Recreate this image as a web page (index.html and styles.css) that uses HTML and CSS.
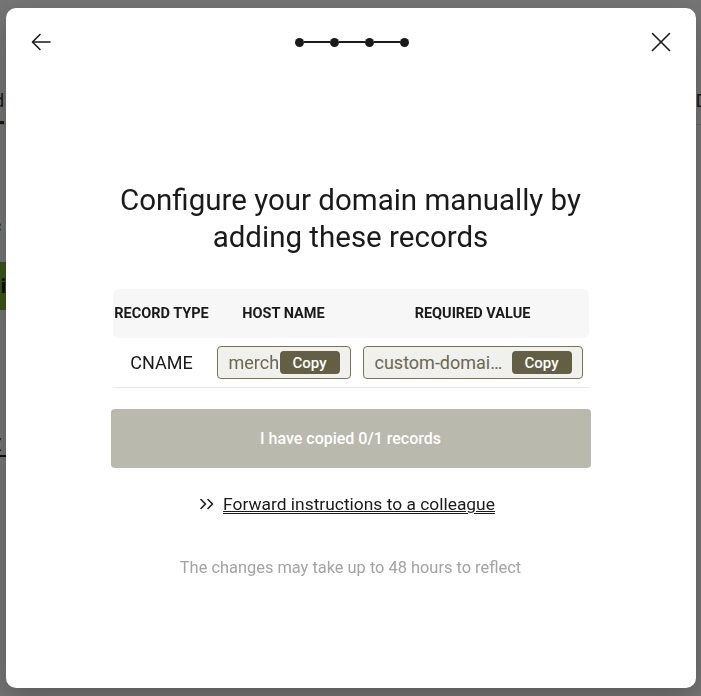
FILE: index.html
```html
<!DOCTYPE html>
<html>
<head lang="en">
    <meta charset="UTF-8">
    <title>Configure domain</title>
    <link rel="stylesheet" href="styles.css">
</head>
<body>
<div class="page">
    <div class="tabs">
        <span class="tab tab-active">Build</span>
        <span class="tab tab-right">Domains</span>
    </div>
    <p class="page-note">Doc</p>
    <div class="page-banner">Publi</div>
    <div class="page-tool"><span>Z</span></div>
</div>

<div class="backdrop">
    <div class="modal">
        <div class="modal-head">
            <button class="icon-btn" type="button">
                <svg width="24" height="24" viewBox="0 0 24 24" fill="none" stroke="#1a1a1a" stroke-width="1.6" stroke-linecap="round" stroke-linejoin="round">
                    <path d="M21 12H4"/>
                    <path d="M11 4.5L3.5 12L11 19.5"/>
                </svg>
            </button>
            <div class="steps">
                <span class="dot"></span><span class="bar"></span>
                <span class="dot"></span><span class="bar"></span>
                <span class="dot"></span><span class="bar"></span>
                <span class="dot"></span>
            </div>
            <button class="icon-btn" type="button">
                <svg width="24" height="24" viewBox="0 0 24 24" fill="none" stroke="#1a1a1a" stroke-width="1.6" stroke-linecap="round">
                    <path d="M3.5 3.5L20.5 20.5"/>
                    <path d="M20.5 3.5L3.5 20.5"/>
                </svg>
            </button>
        </div>

        <div class="modal-body">
            <h1 class="title">Configure your domain manually by adding these records</h1>

            <div class="records">
                <div class="records-head">
                    <span>RECORD TYPE</span>
                    <span>HOST NAME</span>
                    <span>REQUIRED VALUE</span>
                </div>
                <div class="records-row">
                    <span class="rec-type">CNAME</span>
                    <div class="field field-host">
                        <span class="field-text">merch</span>
                        <button class="copy" type="button">Copy</button>
                    </div>
                    <div class="field field-value">
                        <span class="field-text">custom-domains.storefront-cdn.net</span>
                        <button class="copy" type="button">Copy</button>
                    </div>
                </div>
            </div>

            <button class="confirm" type="button">I have copied 0/1 records</button>

            <a class="forward" href="#">
                <svg width="16" height="12" viewBox="0 0 16 12" fill="none" stroke="#1a1a1a" stroke-width="1.6" stroke-linecap="round" stroke-linejoin="round">
                    <path d="M2 1.5L6.5 6L2 10.5"/>
                    <path d="M9 1.5L13.5 6L9 10.5"/>
                </svg>
                <span>Forward instructions to a colleague</span>
            </a>

            <p class="hint">The changes may take up to 48 hours to reflect</p>
        </div>
    </div>
</div>
</body>
</html>
```

FILE: styles.css
```css
* {
    box-sizing: border-box;
}

html, body {
    margin: 0;
    height: 100%;
}

body {
    font-family: Roboto, "Noto Sans", "Liberation Sans", sans-serif;
    color: #1a1a1a;
    background: #fff;
    overflow: hidden;
}

/* page behind the dialog */
.page {
    height: 100%;
    padding-top: 88px;
    overflow: hidden;
}

.tabs {
    display: flex;
    justify-content: space-between;
    height: 37px;
    border-bottom: 1px solid #e2e2e2;
    font-size: 18px;
}

.tab {
    padding-top: 2px;
}

.tab-active {
    margin-left: -36px;
    border-bottom: 3px solid #2f2f1e;
    color: #3a361c;
}

.tab-right {
    margin-right: -66px;
    color: #3b3620;
}

.page-note {
    margin: 90px 0 0 -30px;
    font-size: 18px;
    color: #4a3f1a;
}

.page-banner {
    margin: 26px 0 0 -40px;
    width: 48px;
    height: 48px;
    line-height: 48px;
    background: #7fb93a;
    color: #1a1a1a;
    font-size: 20px;
    font-weight: 700;
}

.page-tool {
    margin: 124px 0 0 -9px;
    width: 20px;
    border-bottom: 2px solid #222;
    font-size: 18px;
    color: #333;
}

/* dialog */
.backdrop {
    position: fixed;
    inset: 0;
    background: rgba(0, 0, 0, 0.54);
    display: flex;
    align-items: center;
    justify-content: center;
}

.modal {
    width: 690px;
    height: 680px;
    background: #fff;
    border-radius: 10px;
    box-shadow: 0 10px 30px rgba(0, 0, 0, 0.25);
}

.modal-head {
    display: flex;
    align-items: center;
    justify-content: space-between;
    padding: 22px 23px 22px 23px;
}

.icon-btn {
    width: 24px;
    height: 24px;
    padding: 0;
    border: 0;
    background: none;
    display: flex;
}

.steps {
    display: flex;
    align-items: center;
    margin-left: 3px;
}

.dot {
    width: 9px;
    height: 9px;
    border-radius: 50%;
    background: #1a1a1a;
}

.bar {
    width: 26px;
    height: 1.5px;
    background: #1a1a1a;
}

.modal-body {
    width: 480px;
    margin: 0 auto;
    display: flex;
    flex-direction: column;
    align-items: center;
}

.title {
    margin: 106px 0 0;
    font-size: 29.5px;
    line-height: 37px;
    font-weight: 400;
    text-align: center;
}

.records {
    width: 476px;
    margin-top: 33px;
}

.records-head,
.records-row {
    display: grid;
    grid-template-columns: 98px 146px 232px;
    align-items: center;
    justify-items: center;
}

.records-head {
    height: 49px;
    background: #f7f7f7;
    border-radius: 6px;
    font-size: 14.5px;
    font-weight: 700;
}

.records-row {
    height: 50px;
    border-bottom: 1px solid #e6e6e6;
}

.rec-type {
    font-size: 18px;
}

.field {
    display: flex;
    align-items: center;
    height: 33px;
    padding: 0 10px 0 11px;
    background: #f0f0ed;
    border: 1px solid #76745f;
    border-radius: 4px;
    font-size: 18px;
    color: #6a6852;
}

.field-host {
    width: 134px;
}

.field-value {
    width: 220px;
    gap: 6px;
}

.field-text {
    flex: 1;
    min-width: 0;
    white-space: nowrap;
    overflow: hidden;
    text-overflow: ellipsis;
}

.copy {
    flex: none;
    width: 60px;
    height: 23px;
    padding: 0;
    border: 0;
    border-radius: 4px;
    background: #625f44;
    color: #fff;
    font-family: inherit;
    font-size: 15px;
    font-weight: 500;
}

.confirm {
    width: 480px;
    height: 59px;
    margin-top: 21px;
    border: 0;
    border-radius: 4px;
    background: #b9b9ad;
    color: #fff;
    font-family: inherit;
    font-size: 16px;
    font-weight: 500;
}

.forward {
    display: flex;
    align-items: center;
    gap: 8px;
    margin-top: 24px;
    margin-right: 7px;
    font-size: 17.4px;
    line-height: 24px;
    color: #1a1a1a;
}

.forward span {
    text-decoration: underline;
    text-underline-offset: 3px;
}

.hint {
    margin: 42px 0 0;
    font-size: 16.4px;
    line-height: 20px;
    color: #a3a3a3;
}
```
